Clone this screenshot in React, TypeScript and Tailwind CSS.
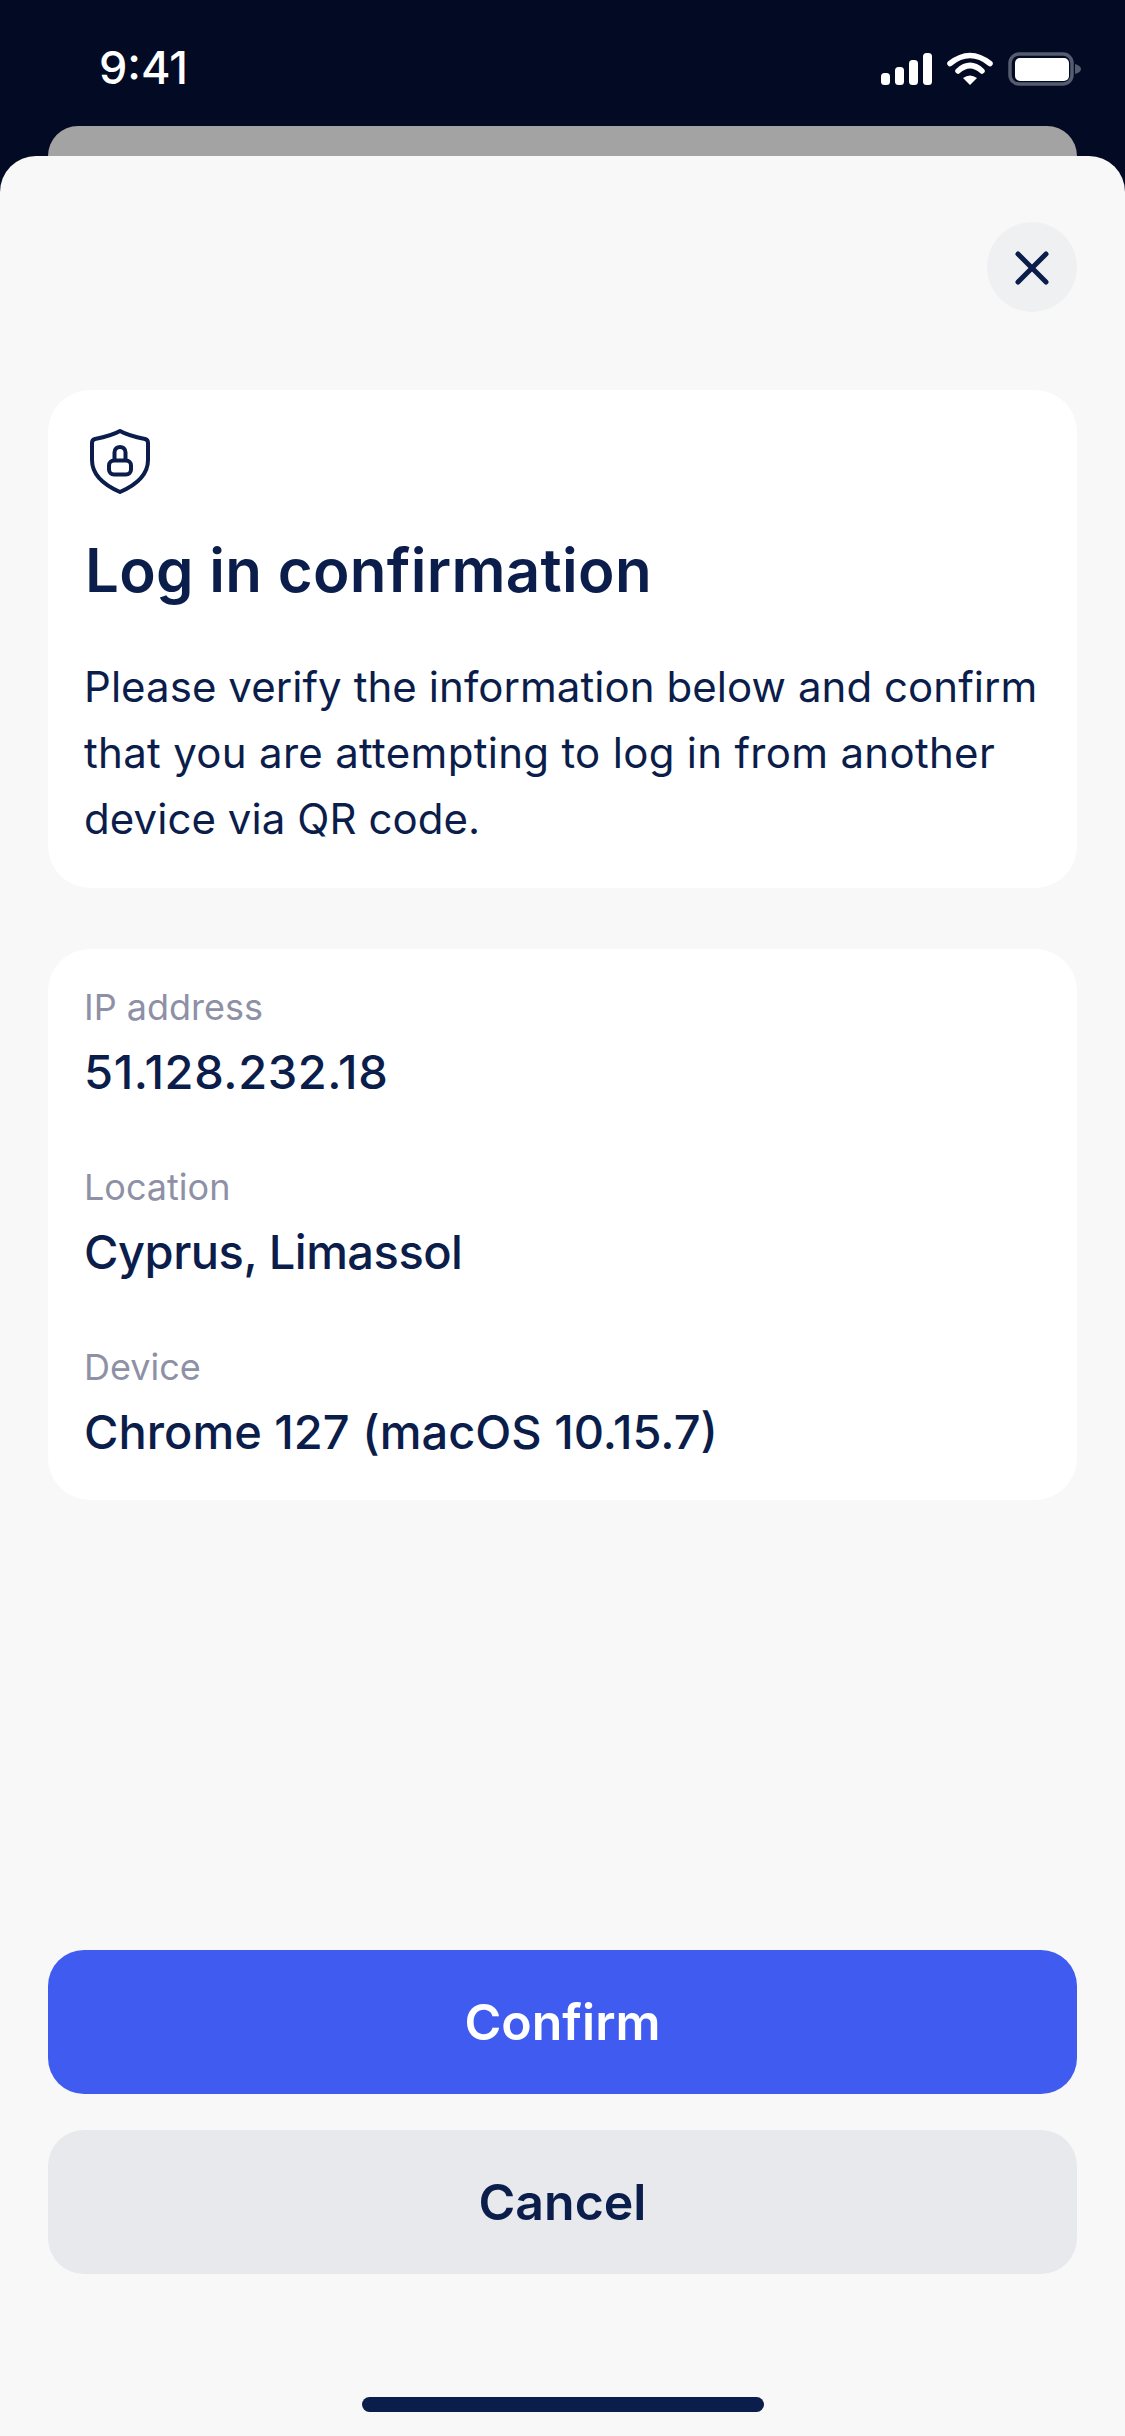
export default function App() {
  const rows = [
    ["IP address", "51.128.232.18", "tracking-[0.6px]"],
    ["Location", "Cyprus, Limassol", "tracking-[-0.5px]"],
    ["Device", "Chrome 127 (macOS 10.15.7)", "tracking-[0px]"],
  ];
  return (
    <div className="relative h-[2436px] w-[1125px] overflow-hidden bg-[#030a23] font-['Inter',sans-serif] text-[#0b1d4a]">
      <div className="flex h-[126px] items-start justify-between pl-[99px] pr-[41px] pt-[43px]">
        <span className="text-[45px] leading-[50px] font-medium text-white">9:41</span>
        <svg width="204" height="38" viewBox="0 0 204 38" className="mt-[7px]" fill="none">
          <rect x="1" y="23" width="9" height="12" rx="3.5" fill="#fff" />
          <rect x="15" y="17" width="9" height="18" rx="3.5" fill="#fff" />
          <rect x="29" y="10" width="9" height="25" rx="3.5" fill="#fff" />
          <rect x="43" y="3" width="9" height="32" rx="3.5" fill="#fff" />
          <path d="M70 13.5 Q90 -2.5 110 13.5" stroke="#fff" strokeWidth="5.5" strokeLinecap="round" />
          <path d="M78 21 Q90 10 102 21" stroke="#fff" strokeWidth="5.5" strokeLinecap="round" />
          <path d="M83 28 Q90 23 97 28 L90 35 Z" fill="#fff" />
          <rect x="130" y="4" width="62" height="30" rx="9" stroke="#555c70" strokeWidth="3.5" />
          <rect x="135" y="8" width="54" height="23" rx="5" fill="#fff" />
          <path d="M195 14 C199 15 201 17 201 19 C201 21 199 23 195 24 Z" fill="#555c70" />
        </svg>
      </div>
      <div className="mx-[48px] h-[60px] rounded-t-[30px] bg-[#a3a3a3]" />
      <div className="absolute inset-x-0 bottom-0 top-[156px] flex flex-col rounded-t-[36px] bg-[#f8f8f8] px-[48px]">
        <div className="mt-[66px] flex justify-end">
          <button className="flex h-[90px] w-[90px] items-center justify-center rounded-full bg-[#eff0f2]">
            <svg width="34" height="34" viewBox="0 0 34 34" fill="none" stroke="#0b1d4a" strokeWidth="5" strokeLinecap="round" className="translate-y-[1px]">
              <path d="M3 3 L31 31 M31 3 L3 31" />
            </svg>
          </button>
        </div>
        <section className="mt-[78px] h-[498px] rounded-[42px] bg-white px-[36px] pt-[37px]">
          <svg width="62" height="68" viewBox="0 0 62 68" fill="none" stroke="#0b1d4a" strokeWidth="4" strokeLinecap="round" strokeLinejoin="round" className="ml-[5px]">
            <path d="M31 4 C38 8 46 10 56 12 C58 12.5 59 14 59 16 V33 C59 48 47 58 31 65 C15 58 3 48 3 33 V16 C3 14 4 12.5 6 12 C16 10 24 8 31 4 Z" />
            <rect x="20" y="33.5" width="22" height="14" rx="5" />
            <path d="M25.5 33 V25.5 C25.5 18 36.5 18 36.5 25.5 V33" />
          </svg>
          <h1 className="mt-[42px] ml-[1px] text-[60px] leading-[66px] font-semibold tracking-[0.3px]">Log in confirmation</h1>
          <p className="mt-[51px] text-[42px] leading-[66px] tracking-[0.06px]">
            Please verify the information below and confirm <span className="tracking-[0.3px]">that you are attempting to log in from another</span> device via QR code.
          </p>
        </section>
        <section className="mt-[61px] flex h-[551px] flex-col gap-[64px] rounded-[42px] bg-white px-[36px] pt-[36px]">
          {rows.map(([label, value, tracking]) => (
            <div key={label} className="flex flex-col gap-[14px]">
              <span className="text-[36px] leading-[44px] text-[#8e90a6]">{label}</span>
              <span className={`text-[47px] leading-[58px] font-medium ${tracking}`}>{value}</span>
            </div>
          ))}
        </section>
        <div className="mt-auto flex flex-col gap-[36px]">
          <button className="h-[144px] rounded-[36px] bg-[#3f5bf0] text-[50px] font-semibold text-white">Confirm</button>
          <button className="h-[144px] rounded-[36px] bg-[#e7e9ed] text-[50px] font-semibold">Cancel</button>
        </div>
        <div className="mx-auto mb-[24px] mt-[123px] h-[15px] w-[402px] rounded-full bg-[#0b1d4a]" />
      </div>
    </div>
  );
}
